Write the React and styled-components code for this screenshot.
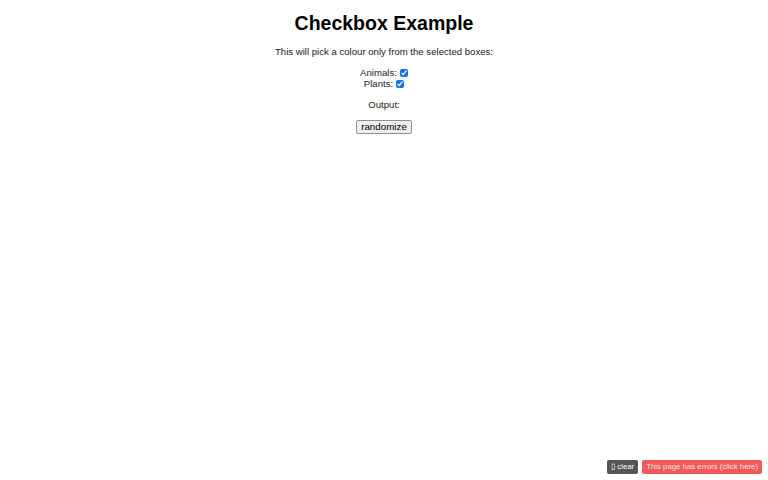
import React, { useState } from 'react';
import styled, { createGlobalStyle } from 'styled-components';

const GlobalStyle = createGlobalStyle`
  html, body {
    margin: 0;
    padding: 0;
    background: #ffffff;
  }
  body {
    font-family: "Liberation Sans", Arial, sans-serif;
    color: #000000;
  }
`;

const Page = styled.div`
  padding: 11px 5px 0;
  text-align: center;
`;

const Title = styled.h1`
  margin: 0 0 11px;
  font-size: 19.5px;
  line-height: 24px;
  font-weight: bold;
`;

const Text = styled.p`
  margin: 0 0 ${props => props.gap || '10px'};
  font-size: 9.6px;
  line-height: 12px;
  color: #222;
`;

const Options = styled.div`
  margin-bottom: 10px;
`;

const Row = styled.div`
  display: flex;
  justify-content: center;
  align-items: center;
  font-size: 9.6px;
  line-height: 11px;
  color: #222;
`;

const Check = styled.input`
  width: 8px;
  height: 8px;
  margin: 0 0 0 3px;
  accent-color: #1a73e8;
`;

const Button = styled.button`
  font-family: "Liberation Sans", Arial, sans-serif;
  font-size: 9.8px;
  line-height: 11px;
  padding: 0 4px;
  height: 14px;
  background: #efefef;
  border: 1px solid #8f8f8f;
  border-radius: 2px;
  color: #000;
`;

const ErrorBar = styled.div`
  position: fixed;
  right: 6px;
  bottom: 6px;
  display: flex;
  gap: 4px;
`;

const BarButton = styled.div`
  font-family: "Liberation Sans", Arial, sans-serif;
  font-size: 7.8px;
  line-height: 14px;
  height: 14px;
  padding: 0 4px;
  border-radius: 2px;
  color: ${props => props.color};
  background: ${props => props.bg};
`;

export default function App() {
  const [animals, setAnimals] = useState(true);
  const [plants, setPlants] = useState(true);

  return (
    <>
      <GlobalStyle />
      <Page>
        <Title>Checkbox Example</Title>
        <Text gap="9px">This will pick a colour only from the selected boxes:</Text>
        <Options>
          <Row>
            Animals:
            <Check type="checkbox" checked={animals} onChange={e => setAnimals(e.target.checked)} />
          </Row>
          <Row>
            Plants:
            <Check type="checkbox" checked={plants} onChange={e => setPlants(e.target.checked)} />
          </Row>
        </Options>
        <Text gap="5px">Output:</Text>
        <Button>randomize</Button>
      </Page>
      <ErrorBar>
        <BarButton bg="#555555" color="#ffffff">&#9647; clear</BarButton>
        <BarButton bg="#f25a5a" color="#ffe0e0">This page has errors (click here)</BarButton>
      </ErrorBar>
    </>
  );
}
